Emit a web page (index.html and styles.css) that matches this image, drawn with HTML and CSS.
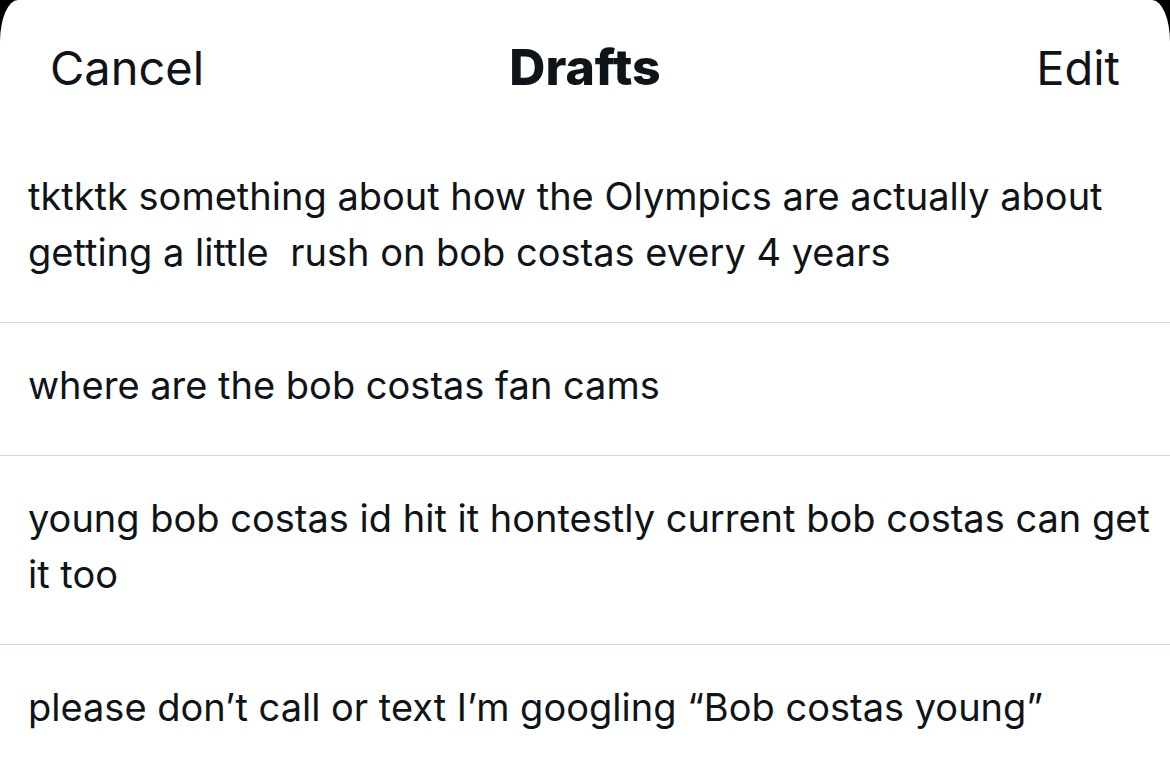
FILE: index.html
```html
<!DOCTYPE html>
<html lang="en">
<head>
<meta charset="UTF-8">
<meta name="viewport" content="width=device-width, initial-scale=1.0">
<title>Drafts</title>
<link rel="stylesheet" href="styles.css">
</head>
<body>
<div class="sheet">
  <div class="header">
    <button class="nav-btn cancel-btn">Cancel</button>
    <h1>Drafts</h1>
    <button class="nav-btn edit-btn">Edit</button>
  </div>
  <ul class="drafts">
    <li>tktktk something about how the Olympics are actually about getting a little&nbsp; rush on bob costas every 4 years</li>
    <li>where are the bob costas fan cams</li>
    <li>young bob costas id hit it hontestly current bob costas can get it too</li>
    <li>please don’t call or text I’m googling “Bob costas young”</li>
  </ul>
</div>
</body>
</html>
```

FILE: styles.css
```css
body {
  margin: 0;
  background-color: #000;
  font-family: Inter, "Noto Sans", sans-serif;
  color: #0f1419;
}

.sheet {
  background-color: #fff;
  height: 777px;
  border-top-left-radius: 18px 42px;
  border-top-right-radius: 18px 42px;
  overflow: hidden;
}

/* Cancel / title / Edit */
.header {
  display: grid;
  grid-template-columns: 1fr auto 1fr;
  align-items: center;
  height: 134px;
  padding: 0 50px 0 50px;
}

.header h1 {
  margin: 0;
  font-size: 50px;
  font-weight: 800;
}

.nav-btn {
  border: none;
  background: transparent;
  padding: 0;
  font-family: inherit;
  font-size: 47px;
  color: #0f1419;
}

.cancel-btn {
  justify-self: start;
}

.edit-btn {
  justify-self: end;
}

.drafts {
  list-style-type: none;
  margin: 0;
  padding: 0;
}

.drafts li {
  padding: 34px 8px 42px 28px;
  font-size: 38px;
  line-height: 56px;
  border-bottom: 1px solid #cfd9de;
}
```
